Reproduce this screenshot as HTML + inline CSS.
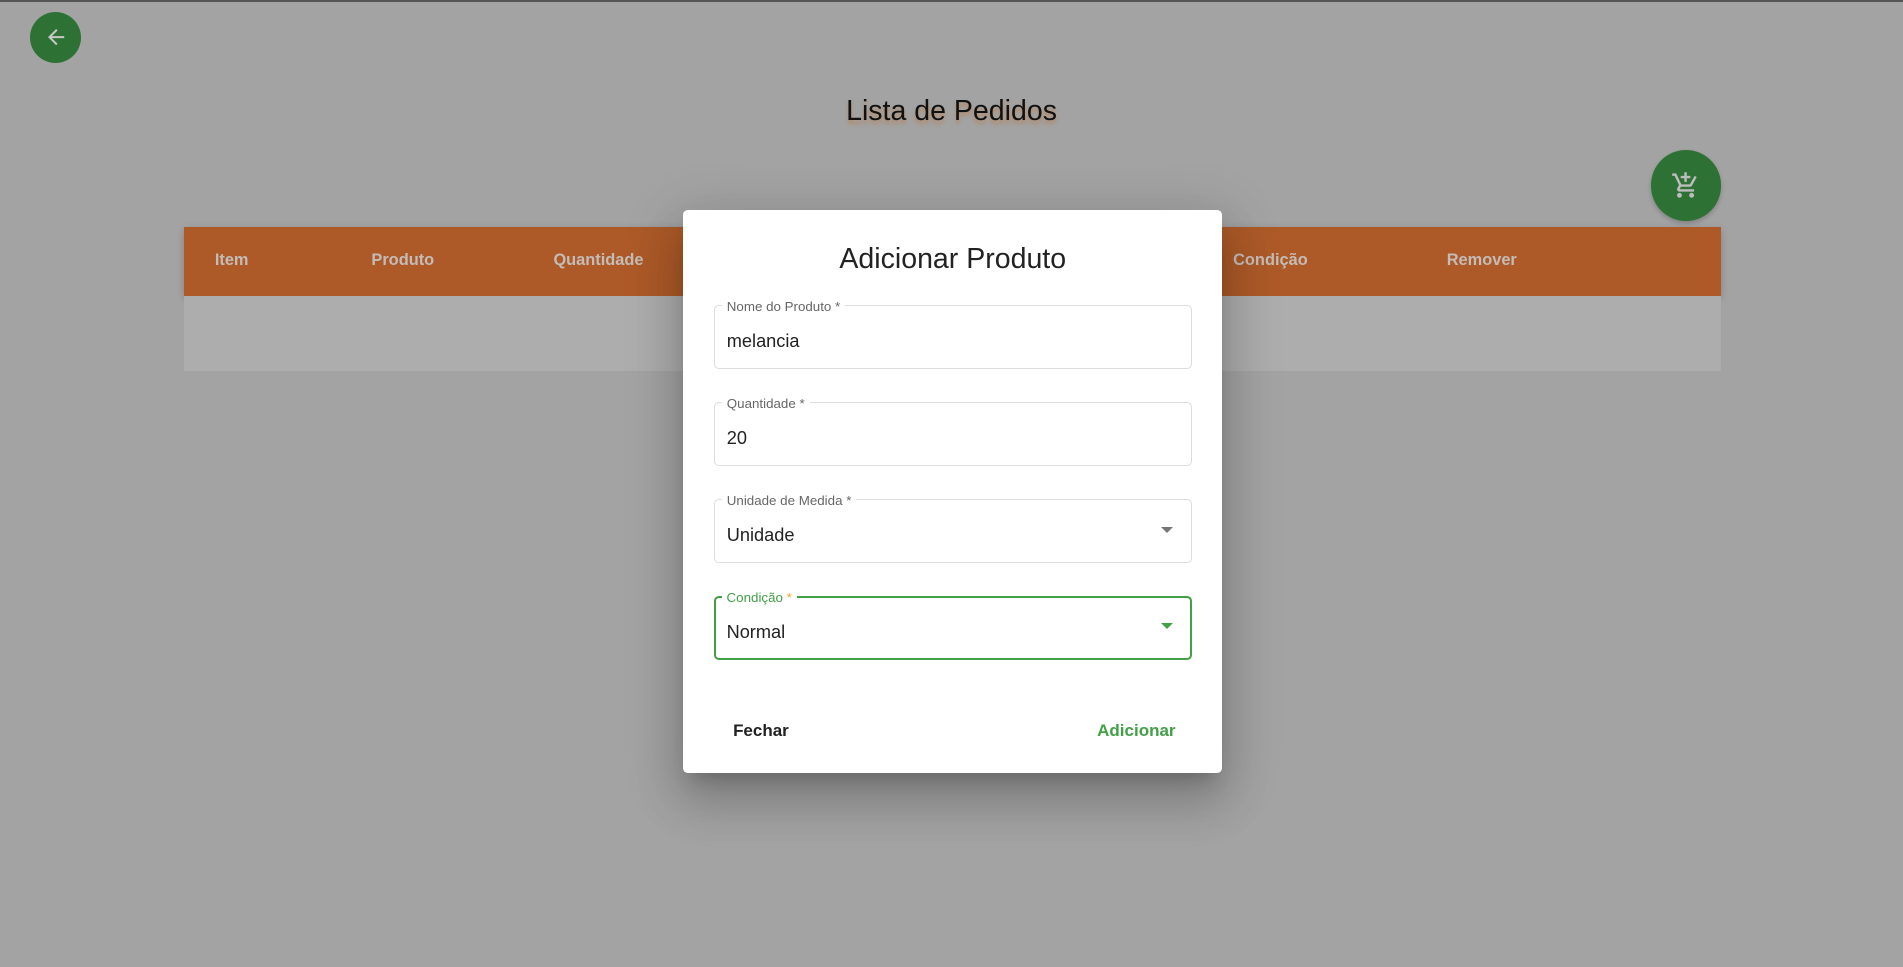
<!DOCTYPE html>
<html><head><meta charset="utf-8"><style>
html,body{margin:0;padding:0;}
body{width:1903px;height:967px;overflow:hidden;background:#a3a3a3;font-family:"Liberation Sans",sans-serif;}
#s{position:absolute;left:0;top:0;width:1568px;height:797px;zoom:1.2137;}
.a{position:absolute;}
.top{left:0;top:0;width:1568px;height:1.5px;background:#555;}
.fab{border-radius:50%;background:#2e7134;display:flex;align-items:center;justify-content:center;}
.th{color:#c4bcb7;font-size:13.5px;font-weight:bold;top:207px;}
.fld{left:588px;width:394px;height:53px;border:1px solid #ddd;border-radius:4px;box-sizing:border-box;}
.lbl{position:absolute;left:6px;top:-5px;background:#fff;padding:0 4px;font-size:11px;color:#666;line-height:12px;}
.val{position:absolute;left:10px;top:21px;font-size:15px;color:#222;}
.arr{position:absolute;right:15px;top:22px;width:0;height:0;border-left:5px solid transparent;border-right:5px solid transparent;border-top:5px solid #757575;}
</style></head><body><div id="s">
<div class="a top"></div>
<div class="a fab" style="left:25px;top:10px;width:42px;height:42px;">
<svg width="20" height="20" viewBox="0 0 24 24"><path d="M20 11H7.8l5.6-5.6L12 4l-8 8 8 8 1.4-1.4L7.8 13H20z" fill="#c8c8c8"/></svg></div>
<div class="a" style="left:0;width:1568px;top:78px;text-align:center;font-size:23.5px;color:#111;text-shadow:0 3px 3px rgba(200,110,40,.5);">Lista de Pedidos</div>
<div class="a fab" style="left:1360px;top:124px;width:58px;height:58px;box-shadow:0 2px 4px rgba(0,0,0,.2);">
<svg width="24" height="24" viewBox="0 0 24 24" fill="#bdbdbd"><path d="M11 9h2V6h3V4h-3V1h-2v3H8v2h3v3zm-4 9c-1.1 0-2 .9-2 2s.9 2 2 2 2-.9 2-2-.9-2-2-2zm10 0c-1.1 0-2 .9-2 2s.9 2 2 2 2-.9 2-2-.9-2-2-2zm-9.8-3.2.03-.12.9-1.68h7.45c.75 0 1.41-.41 1.75-1.03l3.86-7.01L19.420 4l-3.87 7H8.53L4.27 2H1v2h2l3.6 7.59-1.35 2.45c-.16.28-.25.61-.25.96 0 1.1.9 2 2 2h12v-2H7.42c-.13 0-.25-.11-.25-.25z"/></svg></div>
<div class="a" style="left:152px;top:187px;width:1266px;height:57px;background:#ad5a28;box-shadow:0 2px 6px rgba(0,0,0,.2);"></div>
<div class="a" style="left:152px;top:244px;width:1266px;height:62px;background:#adadad;"></div>
<div class="a th" style="left:177px;">Item</div>
<div class="a th" style="left:306px;">Produto</div>
<div class="a th" style="left:456px;">Quantidade</div>
<div class="a th" style="left:1016px;">Condição</div>
<div class="a th" style="left:1192px;">Remover</div>
<div class="a" style="left:563px;top:173px;width:444px;height:464px;background:#fff;border-radius:4px;box-shadow:0 11px 15px -7px rgba(0,0,0,.2),0 24px 38px 3px rgba(0,0,0,.14),0 9px 46px 8px rgba(0,0,0,.12);"></div>
<div class="a" style="left:563px;width:444px;top:200px;text-align:center;font-size:23.5px;color:#222;">Adicionar Produto</div>
<div class="a fld" style="top:251px;"><span class="lbl">Nome do Produto *</span><span class="val">melancia</span></div>
<div class="a fld" style="top:331px;"><span class="lbl">Quantidade *</span><span class="val">20</span></div>
<div class="a fld" style="top:411px;"><span class="lbl">Unidade de Medida *</span><span class="val">Unidade</span><span class="arr"></span></div>
<div class="a fld" style="top:491px;border:2px solid #43a047;"><span class="lbl" style="left:5px;top:-6px;color:#43a047;">Condição <span style="color:#f5a623">*</span></span><span class="val" style="left:9px;top:20px;">Normal</span><span class="arr" style="right:14px;top:21px;border-top-color:#43a047;"></span></div>
<div class="a" style="left:604px;top:594px;font-size:14px;font-weight:bold;color:#222;">Fechar</div>
<div class="a" style="left:904px;top:594px;font-size:14px;font-weight:bold;color:#43a047;">Adicionar</div>
</div></body></html>
